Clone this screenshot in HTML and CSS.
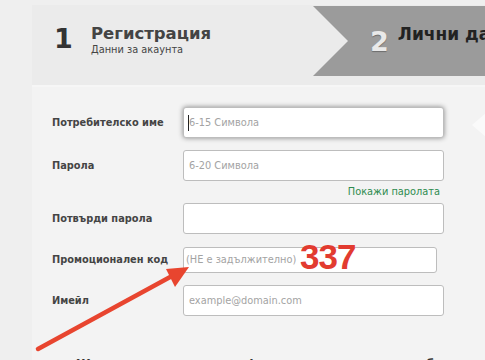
FILE: index.html
```html
<!DOCTYPE html>
<html lang="bg">
<head>
    <meta charset="UTF-8">
    <title>Регистрация</title>
    <link rel="stylesheet" href="styles.css">
</head>
<body>

    <div class="page">
        <div class="steps">
            <div class="step step-active">
                <span class="step-num">1</span>
                <div>
                    <div class="step-title">Регистрация</div>
                    <div class="step-sub">Данни за акаунта</div>
                </div>
            </div>
            <div class="step step-next">
                <span class="step-num">2</span>
                <div class="step-title">Лични данни</div>
            </div>
        </div>

        <div class="form">
            <div class="row">
                <label>Потребителско име</label>
                <div class="field focused"><span class="caret"></span>6-15 Символа</div>
            </div>
            <div class="row">
                <label>Парола</label>
                <div class="field">6-20 Символа</div>
            </div>
            <div class="show-pass">Покажи паролата</div>
            <div class="row">
                <label>Потвърди парола</label>
                <div class="field"></div>
            </div>
            <div class="row">
                <label>Промоционален код</label>
                <div class="field promo">(НЕ е задължително)</div>
            </div>
            <div class="row">
                <label>Имейл</label>
                <div class="field">example@domain.com</div>
            </div>
            <p class="note">Желая да получавам информация за промоции и бонуси</p>
        </div>
    </div>

    <div class="tip-arrow"></div>
    <div class="mark">337</div>

    <svg class="pointer" width="485" height="360" viewBox="0 0 485 360">
        <line x1="38" y1="349" x2="172" y2="276" stroke="#e8452f" stroke-width="4.5" stroke-linecap="round"/>
        <polygon points="189,267 166,269 175,287" fill="#e8452f"/>
    </svg>

</body>
</html>
```

FILE: styles.css
```css
body {
    margin: 0;
    background: #efefef;
    font-family: 'DejaVu Sans', Verdana, sans-serif;
    color: #444;
    overflow: hidden;
}
.page {
    margin-left: 32px;
    padding-top: 5px;
}
.steps {
    display: flex;
    height: 80px;
    background: #ebebeb;
    border-bottom: 2px solid #f6f6f6;
}
.step {
    display: flex;
    align-items: flex-start;
}
.step-active {
    flex: 0 0 281px;
    padding-top: 19px;
}
.step-active .step-num {
    width: 37px;
    padding-left: 22px;
    font-size: 27px;
    font-weight: bold;
    color: #333;
    line-height: 1;
    margin-top: 1px;
}
.step-title {
    font-size: 16.5px;
    font-weight: bold;
    color: #444;
    line-height: 20px;
}
.step-sub {
    font-size: 9.8px;
    line-height: 12px;
    color: #444;
}
.step-next {
    flex: 1;
    min-width: 0;
    overflow: hidden;
    height: 70px;
    margin-top: 1px;
    background: #9b9b9b;
    clip-path: polygon(0 0, 100% 0, 100% 100%, 0 100%, 35px 50%);
    padding-left: 57px;
    padding-top: 18px;
    box-sizing: border-box;
    white-space: nowrap;
}
.step-next .step-num {
    font-size: 27px;
    font-weight: bold;
    color: #e9e9e9;
    line-height: 1;
    margin-top: 4px;
    margin-right: 9px;
    text-shadow: 0 1px 1px rgba(0,0,0,0.3);
}
.step-next .step-title {
    color: #222;
    font-size: 17px;
}
.form {
    background: #f3f3f3;
    padding: 20px 0 0 20px;
    height: 300px;
}
.row {
    display: grid;
    grid-template-columns: 131px 261px;
    align-items: center;
    margin-bottom: 12px;
}
.row label {
    font-size: 9.8px;
    font-weight: bold;
    color: #444;
}
.field {
    height: 29px;
    border: 1px solid #bdbdbd;
    border-radius: 3px;
    background: #fff;
    font-size: 9.8px;
    color: #a3a3a3;
    line-height: 29px;
    padding-left: 5px;
    position: relative;
}
.field.focused {
    box-shadow: 0 0 5px rgba(0,0,0,0.45);
}
.caret {
    position: absolute;
    left: 4px;
    top: 7px;
    width: 1px;
    height: 16px;
    background: #222;
}
.field.promo {
    height: 24px;
    line-height: 24px;
    width: 250px;
    padding-left: 2px;
    margin-top: 1px;
}
.show-pass {
    width: 388px;
    text-align: right;
    font-size: 9.8px;
    color: #2e8b4f;
    margin: -7px 0 5px;
    line-height: 12px;
}
.note {
    margin: 41px 0 0 24px;
    font-size: 12px;
    font-weight: bold;
    color: #333;
}
.tip-arrow {
    position: absolute;
    left: 472px;
    top: 113px;
    width: 0;
    height: 0;
    border-top: 12px solid transparent;
    border-bottom: 12px solid transparent;
    border-right: 14px solid #fafafa;
}
.mark {
    position: absolute;
    left: 300px;
    top: 237px;
    font-family: 'Liberation Sans', Arial, sans-serif;
    font-size: 35px;
    font-weight: bold;
    color: #e23b30;
    letter-spacing: -1px;
}
.pointer {
    position: absolute;
    left: 0;
    top: 0;
    pointer-events: none;
}
```
